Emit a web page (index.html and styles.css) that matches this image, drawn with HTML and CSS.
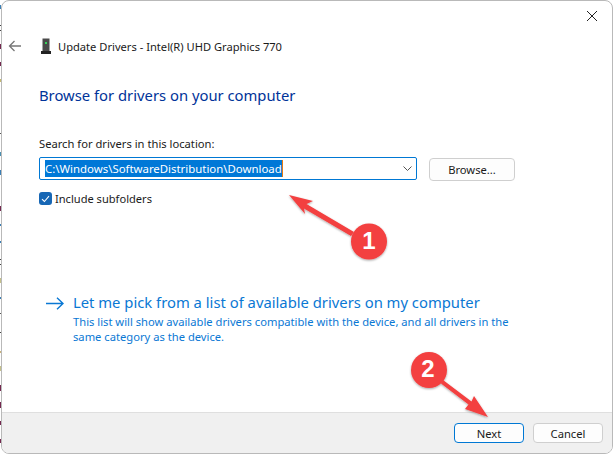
FILE: index.html
```html
<!DOCTYPE html>
<html lang="en">
<head>
<meta charset="utf-8">
<title>Update Drivers</title>
<link rel="stylesheet" href="styles.css">
</head>
<body>
<div class="window">
  <div class="titlebar">
    <svg class="close" width="12" height="12" viewBox="0 0 12 12"><path d="M1 1L11 11M11 1L1 11" stroke="#222" stroke-width="1" fill="none"/></svg>
  </div>
  <div class="nav">
    <svg class="back" width="14" height="12" viewBox="0 0 14 12"><path d="M13 6H1.5M6.5 1L1.5 6L6.5 11" stroke="#777" stroke-width="1.3" fill="none"/></svg>
    <svg class="device" width="10" height="16" viewBox="0 0 10 16"><rect x="1.5" y="0.5" width="7" height="13" fill="#4a4a4a"/><rect x="0" y="13" width="10" height="3" fill="#222"/><rect x="4" y="4" width="2" height="2" fill="#33d45a"/></svg>
    <span class="nav-title">Update Drivers - Intel(R) UHD Graphics 770</span>
  </div>
  <main class="content">
    <h1 class="heading">Browse for drivers on your computer</h1>
    <label class="field-label">Search for drivers in this location:</label>
    <div class="field-row">
      <div class="combo">
        <span class="selected">C:\Windows\SoftwareDistribution\Download</span>
        <svg class="chev" width="9" height="5" viewBox="0 0 9 5"><path d="M0.5 0.5L4.5 4.5L8.5 0.5" stroke="#555" stroke-width="1" fill="none"/></svg>
      </div>
      <div class="btn browse">Browse...</div>
    </div>
    <div class="check-row">
      <span class="checkbox"><svg width="9" height="8" viewBox="0 0 9 8"><path d="M1 4.2L3.4 6.5L8 1.2" stroke="#fff" stroke-width="1.1" fill="none"/></svg></span>
      <span class="check-label">Include subfolders</span>
    </div>
    <div class="pick">
      <svg class="pick-arrow" width="18" height="13" viewBox="0 0 18 13"><path d="M0 6.5H17M11 0.7L17 6.5L11 12.3" stroke="#0a78d4" stroke-width="1.4" fill="none"/></svg>
      <div class="pick-text">
        <div class="pick-title">Let me pick from a list of available drivers on my computer</div>
        <div class="pick-desc">This list will show available drivers compatible with the device, and all drivers in the same category as the device.</div>
      </div>
    </div>
  </main>
  <footer class="footer">
    <div class="btn next">Next</div>
    <div class="btn cancel">Cancel</div>
  </footer>
</div>
<svg class="annot" width="614" height="454" viewBox="0 0 614 454">
  <defs>
    <filter id="sh" x="-20%" y="-20%" width="140%" height="140%"><feDropShadow dx="0" dy="1" stdDeviation="1.2" flood-color="#000" flood-opacity="0.35"/></filter>
  </defs>
  <g filter="url(#sh)" fill="#f33f3f">
    <path d="M289 195L313 201L306.5 204L354 232L351 236L304 208.5L305 214Z"/>
    <circle cx="369" cy="241.5" r="18"/>
    <path d="M488 417L474 396L471.5 401.5L443 380L441 383.5L468.5 404.5L465 409Z"/>
    <circle cx="429" cy="370" r="18"/>
  </g>
</svg>
<span class="num n1">1</span>
<span class="num n2">2</span>
</body>
</html>
```
FILE: styles.css
```css
html, body { margin: 0; padding: 0; }
body {
  width: 614px; height: 454px; position: relative; overflow: hidden;
  background-color: #fff;
  background-image: linear-gradient(to bottom,
    #fff 5px, #3b7fb5 5px, #3b7fb5 9px, #fff 9px,
    #fff 25px, #444 25px, #444 26px, #fff 26px,
    #fff 30px, #444 30px, #444 31px, #fff 31px,
    #fff 44px, #74284f 44px, #74284f 49px, #fff 49px,
    #fff 62px, #74284f 62px, #74284f 66px, #fff 66px,
    #fff 79px, #c4b96e 79px, #c4b96e 82px, #fff 82px,
    #fff 133px, #555 133px, #555 134px, #fff 134px,
    #fff 152px, #4a8fb0 152px, #4a8fb0 156px, #fff 156px,
    #fff 170px, #3b7fb5 170px, #3b7fb5 175px, #fff 175px,
    #fff 206px, #74284f 206px, #74284f 211px, #fff 211px,
    #fff 224px, #3b7fb5 224px, #3b7fb5 226px, #fff 226px,
    #fff 241px, #3b7fb5 241px, #3b7fb5 243px, #fff 243px,
    #fff 259px, #444 259px, #444 260px, #fff 260px,
    #fff 264px, #444 264px, #444 265px, #fff 265px,
    #fff 278px, #c4c08a 278px, #c4c08a 283px, #fff 283px,
    #fff 297px, #3b7fb5 297px, #3b7fb5 299px, #fff 299px,
    #fff 313px, #555 313px, #555 314px, #fff 314px,
    #fff 332px, #444 332px, #444 333px, #fff 333px,
    #fff 351px, #c9b27a 351px, #c9b27a 353px, #fff 353px,
    #fff 366px, #c4c08a 366px, #c4c08a 371px, #fff 371px,
    #fff 385px, #74284f 385px, #74284f 391px, #fff 391px,
    #fff 402px, #74284f 402px, #74284f 408px, #fff 408px,
    #fff 421px, #74284f 421px, #74284f 425px, #fff 425px,
    #fff 439px, #74284f 439px, #74284f 443px, #fff 443px);
  background-size: 1px 454px;
  background-repeat: no-repeat;
  font-family: "Noto Sans", "Open Sans", sans-serif;
}
.window {
  box-sizing: border-box;
  width: 612px; height: 454px; margin-left: 1px;
  background: #fff;
  border: 1px solid #b9b9b9;
  border-radius: 8px;
  display: flex; flex-direction: column;
  overflow: hidden;
}
.titlebar { height: 32px; display: flex; justify-content: flex-end; padding: 9px 14px 0 0; box-sizing: border-box; flex: none; }
.nav { display: flex; align-items: center; height: 26px; padding-left: 6px; flex: none; }
.back { margin-right: 19px; }
.device { margin-right: 7px; }
.nav-title { font-size: 11.15px; color: #1a1a1a; white-space: nowrap; }
.content { flex: 1; padding: 0 0 0 37px; display: flex; flex-direction: column; }
.heading { margin: 25px 0 0; font-weight: 400; font-size: 14.8px; line-height: 22px; color: #003399; }
.field-label { margin-top: 30px; font-size: 11.2px; line-height: 16px; color: #1a1a1a; }
.field-row { display: flex; align-items: flex-start; margin-top: 5px; }
.combo {
  box-sizing: border-box; width: 378px; height: 23px; border: 1px solid #0078d4; border-radius: 2px;
  display: flex; align-items: center; padding: 0 4px 0 5px; justify-content: space-between;
}
.selected { background: #0078d7; color: #fff; font-size: 11.4px; line-height: 17px; white-space: nowrap; border-right: 1px solid #e87a10; }
.btn {
  box-sizing: border-box; display: flex; align-items: center; justify-content: center;
  background: #fdfdfd; border: 1px solid #cfcfcf; border-radius: 4px;
  font-size: 11.2px; color: #1a1a1a;
}
.browse { width: 86px; height: 23px; margin: 1px 0 0 12px; }
.check-row { display: flex; align-items: center; margin-top: 10px; }
.checkbox { box-sizing: border-box; width: 13px; height: 13px; border-radius: 3px; background: #1767b5; display: flex; align-items: center; justify-content: center; }
.check-label { margin-left: 3px; font-size: 11.1px; color: #1a1a1a; }
.pick { display: flex; margin-top: 85px; padding-left: 7px; }
.pick-arrow { margin-top: 6px; flex: none; }
.pick-text { margin-left: 9px; width: 440px; }
.pick-title { font-size: 14.8px; line-height: 23px; color: #0a78d4; white-space: nowrap; }
.pick-desc { font-size: 11.2px; line-height: 15px; color: #0a78d4; }
.footer {
  height: 41px; flex: none; box-sizing: border-box; background: #f0f0f0; border-top: 1px solid #dfdfdf;
  display: flex; justify-content: flex-end; align-items: center; gap: 9px; padding: 0 9px 0 0;
}
.next { width: 70px; height: 20px; border-color: #0078d4; }
.cancel { width: 70px; height: 20px; }
.annot { position: absolute; left: 0; top: 0; pointer-events: none; }
.num { position: absolute; color: #fff; font-weight: 700; font-size: 24px; line-height: 30px; font-family: "Liberation Sans", sans-serif; width: 36px; text-align: center; }
.n1 { left: 351px; top: 226px; }
.n2 { left: 410px; top: 354px; }
```
